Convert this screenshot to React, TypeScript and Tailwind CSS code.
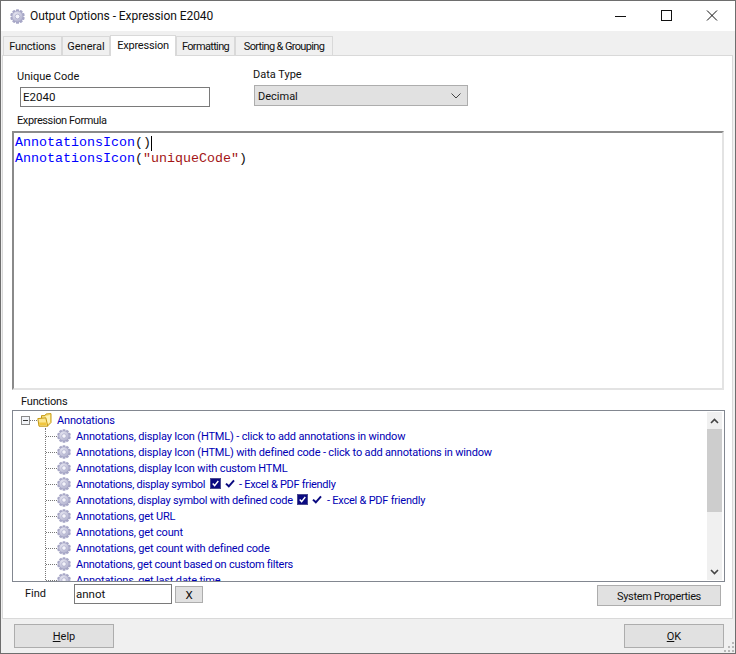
import React from "react";

const Gear = ({ size = 16, id }: { size?: number; id: string }) => {
  const teeth = Array.from({ length: 10 }, (_, i) => i * 36);
  return (
    <svg width={size} height={size} viewBox="0 0 16 16" className="shrink-0">
      <defs>
        <radialGradient id={id} cx="40%" cy="35%" r="75%">
          <stop offset="0%" stopColor="#eeeef7" />
          <stop offset="100%" stopColor="#a6a6c6" />
        </radialGradient>
      </defs>
      {teeth.map((a) => (
        <rect key={a} x="6.4" y="0.2" width="3.2" height="3.8" rx="0.6" fill="#a9a9c8" transform={`rotate(${a} 8 8)`} />
      ))}
      <circle cx="8" cy="8" r="6" fill={`url(#${id})`} stroke="#9c9cbe" strokeWidth="0.6" />
      <circle cx="8" cy="8" r="2.6" fill="#f4f4fa" stroke="#a4a4c4" strokeWidth="0.8" />
    </svg>
  );
};

const Folder = () => (
  <svg width="15" height="14" viewBox="0 0 15 14" className="shrink-0">
    <path d="M4.5 5 L4.5 2.6 L8 2.6 L9 1 L14 0.6 L14 9.5 L10.5 13 Z" fill="#fbe27c" stroke="#c59a18" strokeWidth="1" strokeLinejoin="round" />
    <path d="M5.5 4.5 L13 2 L13 9 L10.5 11.5 Z" fill="#fff3b5" />
    <path d="M0.8 5.6 L8.8 4.8 L10.8 13.2 L2 13.2 Z" fill="#fbe68f" stroke="#c2960f" strokeWidth="1" strokeLinejoin="round" />
    <path d="M2.4 12 L9.6 12 L9.2 9.5 L2 9.5 Z" fill="#f0c53f" />
  </svg>
);

const CheckBox = () => (
  <svg width="11" height="11" viewBox="0 0 11 11" className="shrink-0">
    <rect x="0.5" y="0.5" width="10" height="10" fill="#0a0a80" stroke="#4a4a90" />
    <path d="M2.7 5.6 L4.6 7.6 L8.3 3" fill="none" stroke="#ffffff" strokeWidth="1.4" />
  </svg>
);

const Tick = () => (
  <svg width="10" height="9" viewBox="0 0 10 9" className="shrink-0">
    <path d="M1 4.6 L3.8 7.3 L9 1.4" fill="none" stroke="#0a0a80" strokeWidth="2" />
  </svg>
);

const Sym = () => (
  <span className="inline-flex items-center gap-[4px] mx-[2px] align-[-1px]"><CheckBox /><Tick /></span>
);

const rows: { node: React.ReactNode; t?: string }[] = [
  { node: "Annotations, display Icon (HTML) - click to add annotations in window" },
  { node: "Annotations, display Icon (HTML) with defined code - click to add annotations in window" },
  { node: "Annotations, display Icon with custom HTML" },
  { node: <>Annotations, display symbol <Sym /> - Excel &amp; PDF friendly</>, t: "tracking-[-0.3px]" },
  { node: <>Annotations, display symbol with defined code <Sym /> - Excel &amp; PDF friendly</>, t: "tracking-[-0.22px]" },
  { node: "Annotations, get URL" },
  { node: "Annotations, get count" },
  { node: "Annotations, get count with defined code" },
  { node: "Annotations, get count based on custom filters", t: "tracking-[-0.25px]" },
  { node: "Annotations, get last date time" },
];

const tabs = [
  { label: "Functions", w: "w-[59px]", t: "tracking-[-0.2px]" },
  { label: "General", w: "w-[48px]", t: "" },
  { label: "Expression", w: "w-[66px]", t: "tracking-[-0.2px]", active: true },
  { label: "Formatting", w: "w-[59px]", t: "tracking-[-0.65px]" },
  { label: "Sorting & Grouping", w: "w-[98px]", t: "tracking-[-0.65px]" },
];

const Btn = ({ children, className }: { children: React.ReactNode; className: string }) => (
  <button className={`flex items-center justify-center bg-[#e1e1e1] border border-[#adadad] text-[#111] ${className}`}>{children}</button>
);

export default function App() {
  return (
    <div className="w-[736px] h-[654px] flex flex-col bg-[#f0f0f0] border border-[#6e6e6e] text-[11px] leading-[14px] text-[#111] overflow-hidden font-['Roboto','Liberation_Sans',Arial,sans-serif]">
      {/* Title bar */}
      <div className="h-[30px] shrink-0 bg-white flex items-center pl-[9px]">
        <Gear size={15} id="g-title" />
        <span className="ml-[5px] text-[12px] tracking-[-0.06px] text-[#111]">Output Options - Expression E2040</span>
        <div className="ml-auto flex items-center h-full">
          <svg width="46" height="30" viewBox="0 0 46 30"><path d="M18 15.5 H29" stroke="#111" strokeWidth="1" /></svg>
          <svg width="46" height="30" viewBox="0 0 46 30"><rect x="18.5" y="9.5" width="10" height="10" fill="none" stroke="#111" /></svg>
          <svg width="46" height="30" viewBox="0 0 46 30"><path d="M18 9.5 L28 19.5 M28 9.5 L18 19.5" stroke="#111" strokeWidth="1" /></svg>
        </div>
      </div>

      {/* Tab strip */}
      <div className="h-[24px] shrink-0 flex items-end pl-[2px]">
        {tabs.map((t) =>
          t.active ? (
            <div key={t.label} className={`${t.w} ${t.t} h-[21px] bg-white border border-b-0 border-[#d9d9d9] flex items-center justify-center pb-[1px] -mb-[1px] relative z-10`}>
              {t.label}
            </div>
          ) : (
            <div key={t.label} className={`${t.w} ${t.t} h-[19px] pt-[2px] bg-[#f0f0f0] border border-b-0 border-[#d9d9d9] flex items-center justify-center`}>
              {t.label}
            </div>
          )
        )}
      </div>

      {/* Tab panel */}
      <div className="h-[564px] shrink-0 ml-[1px] mr-[2px] pl-[1px] bg-white border border-[#d9d9d9] flex flex-col">
        <div className="flex h-[51px] shrink-0">
          <div className="w-[236px] pl-[13px] pt-[14px] shrink-0">
            <div className="h-[14px]">Unique Code</div>
            <div className="mt-[3px] ml-[3px] w-[190px] h-[20px] border border-[#7a7a7a] flex items-center px-[2px] text-[11.5px]">E2040</div>
          </div>
          <div className="pt-[12px]">
            <div className="h-[14px] ml-[13px]">Data Type</div>
            <div className="mt-[3px] ml-[14px] w-[214px] h-[21px] bg-[#e1e1e1] border border-[#adadad] flex items-center pl-[3px] pr-[6px]">
              <span className="pt-[2px]">Decimal</span>
              <svg className="ml-auto" width="10" height="6" viewBox="0 0 10 6"><path d="M0.5 0.5 L5 5 L9.5 0.5" fill="none" stroke="#444" /></svg>
            </div>
          </div>
        </div>

        <div className="pl-[13px] mt-[6px] pt-[1px] h-[14px] shrink-0 tracking-[-0.4px]">Expression Formula</div>

        {/* Editor */}
        <div className="mt-[4px] ml-[8px] w-[712px] h-[259px] shrink-0 border-2 border-[#8a8a8a] border-r-[#e3e3e3] border-b-[#e3e3e3] pt-[2px] pl-[1px] font-['Liberation_Mono','Courier_New',monospace] text-[13.33px] leading-[16px] whitespace-pre bg-white">
          <div className="flex items-center h-[16px]">
            <span className="text-[#0000ff]">AnnotationsIcon</span>
            <span className="text-[#111]">()</span>
            <span className="inline-block w-[1px] h-[15px] bg-black" />
          </div>
          <div className="h-[16px]">
            <span className="text-[#0000ff]">AnnotationsIcon</span>
            <span className="text-[#111]">(</span>
            <span className="text-[#a31515]">"uniqueCode"</span>
            <span className="text-[#111]">)</span>
          </div>
        </div>

        <div className="pl-[17px] mt-[4px] pt-[1px] h-[14px] shrink-0 tracking-[-0.2px]">Functions</div>

        {/* Tree */}
        <div className="mt-[2px] ml-[8px] w-[713px] h-[172px] shrink-0 border border-[#828790] flex bg-white overflow-hidden">
          <div className="flex-1 min-w-0 overflow-hidden pt-[1px] text-[#0000b4] leading-[16px] tracking-[-0.16px]">
            <div className="h-[16px] flex items-center pl-[8px]">
              <span className="w-[9px] h-[9px] border border-[#8a8a8a] flex items-center justify-center bg-[#f2f4f8] shrink-0">
                <span className="w-[5px] h-[1px] bg-[#333]" />
              </span>
              <span className="w-[7px] border-t border-dotted border-[#777] shrink-0" />
              <Folder />
              <span className="ml-[5px] pt-[2px]">Annotations</span>
            </div>
            <div className="ml-[32px] border-l border-dotted border-[#777]">
              {rows.map((r, i) => (
                <div key={i} className="h-[16px] flex items-center whitespace-pre">
                  <span className="w-[11px] border-t border-dotted border-[#777] shrink-0" />
                  <Gear size={14} id={`g-row-${i}`} />
                  <span className={`ml-[5px] pt-[2px] ${r.t ?? ""}`}>{r.node}</span>
                </div>
              ))}
            </div>
          </div>
          {/* Scrollbar */}
          <div className="w-[15px] shrink-0 mr-[2px] my-[1px] bg-[#f0f0f0] flex flex-col items-center">
            <div className="h-[17px] shrink-0 flex items-center justify-center">
              <svg width="9" height="6" viewBox="0 0 9 6"><path d="M1 5 L4.5 1.5 L8 5" fill="none" stroke="#444" strokeWidth="1.6" /></svg>
            </div>
            <div className="w-full h-[83px] shrink-0 bg-[#cdcdcd]" />
            <div className="flex-1" />
            <div className="h-[17px] shrink-0 flex items-center justify-center">
              <svg width="9" height="6" viewBox="0 0 9 6"><path d="M1 1 L4.5 4.5 L8 1" fill="none" stroke="#444" strokeWidth="1.6" /></svg>
            </div>
          </div>
        </div>

        {/* Find row */}
        <div className="flex items-start mt-[2px] h-[24px] shrink-0">
          <span className="ml-[21px] mt-[3px] w-[49px]">Find</span>
          <div className="w-[98px] h-[20px] border border-[#7a7a7a] flex items-center px-[1px] text-[11.5px]">annot</div>
          <Btn className="ml-[3px] mt-[2px] w-[28px] h-[17px] text-[11.5px]">X</Btn>
          <Btn className="ml-auto mr-[11px] mt-[1px] w-[124px] h-[21px] pt-[2px] tracking-[-0.35px]">System Properties</Btn>
        </div>
      </div>

      {/* Footer */}
      <div className="flex-1 flex items-start pt-[5px] pl-[13px] pr-[11px] relative">
        <Btn className="w-[100px] h-[24px] pt-[2px]"><span><span className="underline">H</span>elp</span></Btn>
        <Btn className="ml-auto w-[100px] h-[24px] pt-[2px]"><span><span className="underline">O</span>K</span></Btn>
        <svg className="absolute right-[1px] bottom-[1px]" width="10" height="10" viewBox="0 0 10 10">
          <g fill="#b8b8b8">
            <rect x="8" y="0" width="2" height="2" />
            <rect x="4" y="4" width="2" height="2" />
            <rect x="8" y="4" width="2" height="2" />
            <rect x="0" y="8" width="2" height="2" />
            <rect x="4" y="8" width="2" height="2" />
            <rect x="8" y="8" width="2" height="2" />
          </g>
        </svg>
      </div>
    </div>
  );
}
